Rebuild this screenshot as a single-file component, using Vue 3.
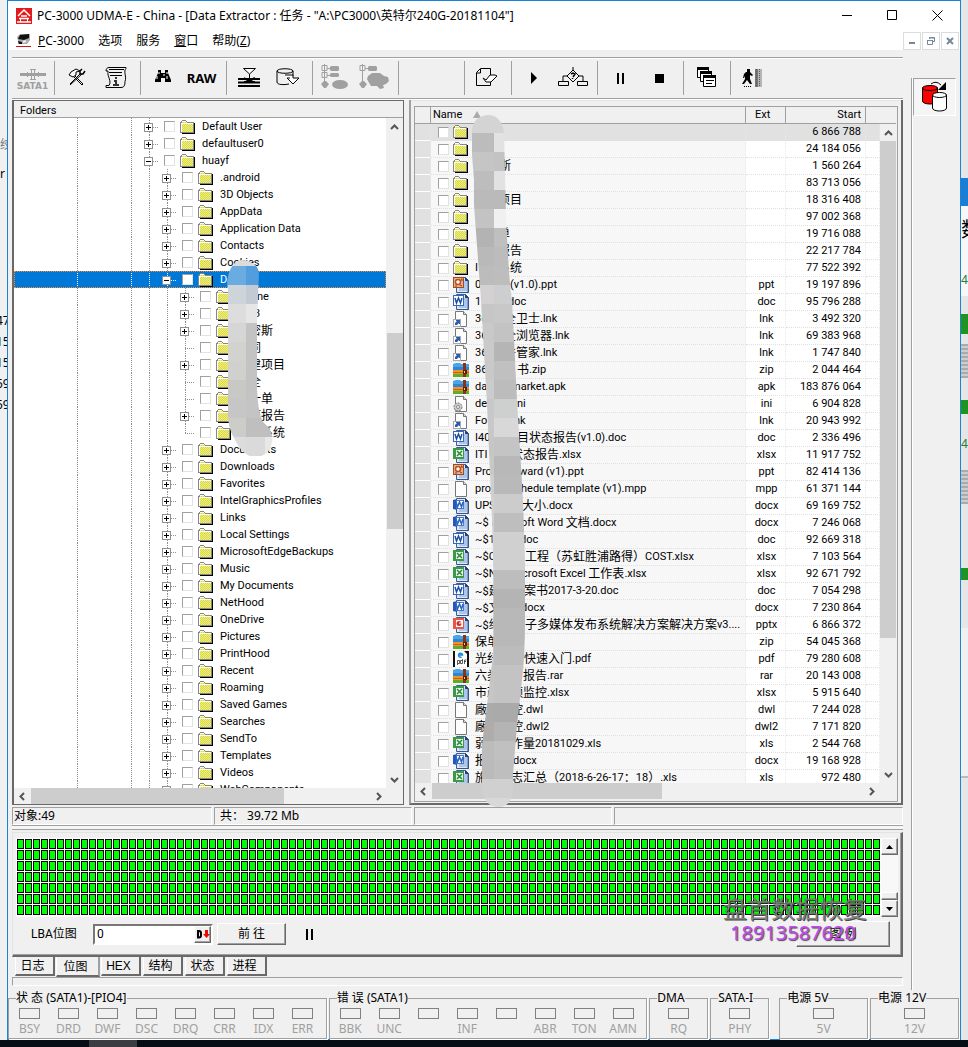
<script setup>
import { h, ref } from 'vue'

const CJK = /([\u2e80-\u9fff\uff00-\uffef]+)/

const MixedText = (props) =>
  props.text
    .split(CJK)
    .filter(Boolean)
    .map((part) => (CJK.test(part) ? h('span', { class: 'cjk' }, part) : part))
MixedText.props = ['text']

const menus = [
  { key: 'P', rest: 'C-3000' },
  { key: '', rest: '选项' },
  { key: '', rest: '服务' },
  { key: '窗', rest: '口' },
  { key: '', rest: '帮助(', tail: 'Z' },
]

const toolbar = [
  [{ id: 'sata', label: 'SATA1' }],
  [{ id: 'tools', label: 'Utilities' }, { id: 'script', label: 'Script' }],
  [{ id: 'find', label: 'Find' }, { id: 'raw', label: 'RAW recovery' }],
  [{ id: 'filter', label: 'Filter' }, { id: 'disk', label: 'Save disk' }],
  [{ id: 'tree1', label: 'Branch' }, { id: 'tree2', label: 'Branches' }],
  [],
  [{ id: 'doc', label: 'Task' }],
  [{ id: 'play', label: 'Start' }, { id: 'flow', label: 'Flow' }],
  [{ id: 'pause', label: 'Pause' }, { id: 'stop', label: 'Stop' }],
  [{ id: 'wins', label: 'Windows' }],
  [{ id: 'exit', label: 'Exit' }],
]

const node = (level, box, text, gap = 0, tail = '') => ({ level, box, text, gap, tail })
const tree = [
  node(0, '+', 'Default User'),
  node(0, '+', 'defaultuser0'),
  node(0, '-', 'huayf'),
  ...['.android', '3D Objects', 'AppData', 'Application Data', 'Contacts', 'Cookies'].map((n) => node(1, '+', n)),
  { ...node(1, '-', 'D'), selected: true },
  node(2, '+', '', 19, 'ne'),
  node(2, '+', '', 16, '3'),
  node(2, '+', '', 11, '密斯'),
  node(2, '', '', 11, '同'),
  node(2, '+', '', 11, '建项目'),
  node(2, '', '', 11, '全'),
  node(2, '', '', 11, '一单'),
  node(2, '+', '', 11, '项报告'),
  { ...node(2, '', '', 23, '系统'), last: true },
  ...[
    'Documents', 'Downloads', 'Favorites', 'IntelGraphicsProfiles', 'Links', 'Local Settings',
    'MicrosoftEdgeBackups', 'Music', 'My Documents', 'NetHood', 'OneDrive', 'Pictures', 'PrintHood',
    'Recent', 'Roaming', 'Saved Games', 'Searches', 'SendTo', 'Templates', 'Videos', 'WebComponents',
  ].map((n) => node(1, '+', n)),
]
const guidesOf = (n) => [63, 117, 135, ...(n.level > 0 ? [153] : [])]
const ownX = (n) => 135 + n.level * 18

const files = [
  ['folder', '', 0, '', '', '6 866 788'],
  ['folder', '', 0, '', '', '24 184 056'],
  ['folder', '', 24, '斯', '', '1 560 264'],
  ['folder', '', 0, '', '', '83 713 056'],
  ['folder', '', 23, '项目', '', '18 316 408'],
  ['folder', '', 0, '', '', '97 002 368'],
  ['folder', '', 23, '单', '', '19 716 088'],
  ['folder', '', 23, '报告', '', '22 217 784'],
  ['folder', 'I', 23, '系统', '', '77 522 392'],
  ['ppt', '0', 35, '(v1.0).ppt', 'ppt', '19 197 896'],
  ['doc', '1', 33, 'doc', 'doc', '95 796 288'],
  ['lnk', '36', 29, '全卫士.lnk', 'lnk', '3 492 320'],
  ['lnk', '36', 29, '全浏览器.lnk', 'lnk', '69 383 968'],
  ['lnk', '36', 29, '件管家.lnk', 'lnk', '1 747 840'],
  ['zip', '86', 42, '书.zip', 'zip', '2 044 464'],
  ['zip', 'da', 36, 'market.apk', 'apk', '183 876 064'],
  ['ini', 'de', 42, 'ni', 'ini', '6 904 828'],
  ['lnk', 'Fo', 39, 'nk', 'lnk', '20 943 992'],
  ['doc', 'I40', 42, '目状态报告(v1.0).doc', 'doc', '2 336 496'],
  ['xlsx', 'ITI', 36, '状态报告.xlsx', 'xlsx', '11 917 752'],
  ['ppt', 'Pro', 44, 'ward (v1).ppt', 'ppt', '82 414 136'],
  ['blank', 'proj', 46, 'hedule template (v1).mpp', 'mpp', '61 371 144'],
  ['docx', 'UPS', 47, '大小.docx', 'docx', '69 169 752'],
  ['docx', '~$ I', 46, 'oft Word 文档.docx', 'docx', '7 246 068'],
  ['doc', '~$1', 45, 'doc', 'doc', '92 669 318'],
  ['xlsx', '~$C', 50, '工程（苏虹胜浦路得）COST.xlsx', 'xlsx', '7 103 564'],
  ['xlsx', '~$N', 47, 'crosoft Excel 工作表.xlsx', 'xlsx', '92 671 792'],
  ['doc', '~$建', 49, '案书2017-3-20.doc', 'doc', '7 054 298'],
  ['docx', '~$文', 46, 'docx', 'docx', '7 230 864'],
  ['pptx', '~$绍', 50, '子多媒体发布系统解决方案解决方案v3....', 'pptx', '6 866 372'],
  ['zip', '保单', 0, '', 'zip', '54 045 368'],
  ['pdf', '光纤', 49, '快速入门.pdf', 'pdf', '79 280 608'],
  ['zip', '六类', 48, '报告.rar', 'rar', '20 143 008'],
  ['xlsx', '市政', 36, '频监控.xlsx', 'xlsx', '5 915 640'],
  ['blank', '廠房', 36, '控.dwl', 'dwl', '7 244 028'],
  ['blank', '廠房', 36, '控.dwl2', 'dwl2', '7 171 820'],
  ['xlsx', '弱电', 36, '作量20181029.xls', 'xls', '2 544 768'],
  ['docx', '报告', 38, 'docx', 'docx', '19 168 928'],
  ['xlsx', '施工', 36, '志汇总（2018-6-26-17：18）.xls', 'xls', '972 480'],
].map(([icon, text, gap, tail, ext, start]) => ({ icon, text, gap, tail, ext, start }))

const treeBlur = [
  ['#dcdcdc', '#dcdcdc', '#dcdcdc'], ['#6aabe0', '#519ddd', '#519ddd'], ['#cdd4da', '#c3cad3', '#c3cad3'],
  ['#dddddd', '#e6e6e6', '#e6e6e6'], ['#d6d6d6', '#c3c3c3', '#c3c3c3'], ['#d2d2cf', '#c3c3c3', '#c3c3c3'],
  ['#d0d0ce', '#c3c3c3', '#c3c3c3'], ['#c8c8c4', '#c3c3c3', '#c3c3c3'], ['#c6c6c6', '#c4c4c4', '#c4c4c4'],
  ['#cccdc8', '#bfbfbf', '#bfbfbf'], ['#dcdcdc', '#dadada', '#e8e8e8'],
]
const listBlur = [
  ['#d4d4d4', '#d4d4d4'], ['#bcbcbc', '#e2e2e2'], ['#c5c5c5', '#c3c3c3'], ['#bdbdbd', '#e2e2e2'],
  ['#bababa', '#bababa'], ['#c3c3c3', '#f0f0f0'], ['#b3b3b3', '#bfbfbf'], ['#b9b9b9', '#bcbcbc'],
  ['#bcbcbc', '#bdbdbd'], ['#d3d1d1', '#ccced0'], ['#c6c6c6', '#c8c8c8'], ['#c9c9c9', '#c3c3c3'],
  ['#cacaca', '#b5b5b5'], ['#c9c9c9', '#c0c0c0'], ['#cccccc', '#bcbcbc'], ['#c8c8c8', '#ced0d0'],
  ['#c8c8c8', '#d8d8d8'], ['#c6c6c6', '#c4c4c4'], ['#c8c8c8', '#b8b8b8'], ['#cfcfcf', '#b9b9b9'],
  ['#d0d0d0', '#cccccc'], ['#d0d0d0', '#bebebe'], ['#d4d4d4', '#d0d0d0'], ['#d2d2d2', '#d0d0d0'],
  ['#c3c3c3', '#bdbdbd'], ['#b8b8b8', '#b4b4b4'], ['#bababa', '#b8b8b8'], ['#c3c3c3', '#b8b8b8'],
  ['#c6c6c6', '#bcbcbc'], ['#c4c4c4', '#c3c3c3'], ['#c6c6c6', '#c3c3c3'], ['#ababab', '#aaaaaa'],
  ['#b0acac', '#b4b4b4'], ['#bcbcbc', '#c0c0c0'], ['#bababa', '#bebebe'], ['#d0d0d0', '#d0d0d0'],
  ['#d8d8d8', '#d8d8d8'],
]

const tabs = ['日志', '位图', 'HEX', '结构', '状态', '进程']
const activeTab = ref('位图')
const lba = ref('0')

const groups = [
  { id: 'state', title: '状 态 (SATA1)-[PIO4]', leds: ['BSY', 'DRD', 'DWF', 'DSC', 'DRQ', 'CRR', 'IDX', 'ERR'] },
  { id: 'error', title: '错 误 (SATA1)', leds: ['BBK', 'UNC', '', 'INF', '', 'ABR', 'TON', 'AMN'] },
  { id: 'dma', title: 'DMA', leds: ['RQ'] },
  { id: 'sata', title: 'SATA-I', leds: ['PHY'] },
  { id: 'p5', title: '电源 5V', leds: ['5V'] },
  { id: 'p12', title: '电源 12V', leds: ['12V'] },
]
</script>

<template>
  <div class="desktop">
    <svg class="defs" width="0" height="0" aria-hidden="true">
      <defs>
        <pattern id="dither" width="2" height="2" patternUnits="userSpaceOnUse">
          <rect width="2" height="2" fill="#ffff00" /><rect width="1" height="1" fill="#c8c8c8" /><rect x="1" y="1" width="1" height="1" fill="#c8c8c8" />
        </pattern>
        <pattern id="cells" width="8" height="11" patternUnits="userSpaceOnUse">
          <rect width="7" height="10" fill="#000" /><rect x="1" y="1" width="5" height="8" fill="#0f0" />
        </pattern>
      </defs>
      <symbol id="i-folder" viewBox="0 0 16 16">
        <path d="M14 4h1v11H2v-1h12z" fill="#000" />
        <path d="M0 3h1V2h1V1h4v1h1v1h7v1h0v10H0z" fill="#868686" />
        <path d="M1 4h1V2h4v1h1v1h6v9H1z" fill="url(#dither)" />
        <path d="M1 4h12v1H2v8H1zM2 2h4v1H2z" fill="#fff" />
      </symbol>
      <symbol id="i-blank" viewBox="0 0 16 16">
        <path d="M2.500.5h8l3 3v12h-11z" fill="#fdfdfd" stroke="#777" /><path d="M10.500.5v3h3" fill="#ddd" stroke="#777" />
      </symbol>
      <symbol id="i-lnk" viewBox="0 0 16 16">
        <use href="#i-blank" /><rect x="0.500" y="8.500" width="7" height="7" fill="#fff" stroke="#aaa" />
        <path d="M2 14v-2l2-2H3V9h4v4H6v-1l-2 2z" fill="#2a5bb0" />
      </symbol>
      <symbol id="i-ini" viewBox="0 0 16 16">
        <use href="#i-blank" /><circle cx="5" cy="11" r="4" fill="#c8ccca" stroke="#777" stroke-dasharray="2 1" /><circle cx="5" cy="11" r="1.500" fill="#fff" stroke="#888" />
      </symbol>
      <symbol id="i-page" viewBox="0 0 16 16">
        <path d="M3.500.5h9l3 3v12h-12z" fill="#dce9fa" stroke="#3c5d96" /><path d="M12 0l4 4h-4z" fill="#27406e" />
        <path d="M10 5h4M10 7h4M10 9h4M6 11h8M6 13h8" stroke="#7fa2d8" /><path d="M15 4v12H4" fill="none" stroke="#2f4f88" />
      </symbol>
      <symbol id="i-doc" viewBox="0 0 16 16">
        <use href="#i-page" /><rect x="0.500" y="1.500" width="10" height="10" fill="#fff" stroke="#3767b5" /><path d="M2 4l1.500 5L5.500 4l2 5L9 4" fill="none" stroke="#1f4ea6" stroke-width="1.500" />
      </symbol>
      <symbol id="i-docx" viewBox="0 0 16 16">
        <use href="#i-page" /><path d="M0 2l4-1v11l-4-1z" fill="#2358b8" /><rect x="3.500" y="2.500" width="7" height="8" fill="#fff" stroke="#4779c5" /><path d="M3 4l1.500 5L6.500 4l2 5L10 4" fill="none" stroke="#2c62c0" stroke-width="1.500" />
      </symbol>
      <symbol id="i-xlsx" viewBox="0 0 16 16">
        <use href="#i-page" /><path d="M0 1h11v11H0z" fill="#3c9a46" /><path d="M3 3h7v7H3z" fill="#e9f6e9" /><path d="M4 4l5 5M9 4L4 9" stroke="#27863a" stroke-width="1.500" />
      </symbol>
      <symbol id="i-ppt" viewBox="0 0 16 16">
        <use href="#i-page" /><rect x="0.500" y="0.500" width="10" height="10" fill="#e9b08c" stroke="#a04a22" /><circle cx="5" cy="5" r="2.500" fill="#fff" stroke="#b9501f" stroke-width="1.500" /><path d="M2 9h2M7 8l2 1M8 2h1v2" fill="none" stroke="#8d3511" />
      </symbol>
      <symbol id="i-pptx" viewBox="0 0 16 16">
        <use href="#i-page" /><path d="M0 1h11v11H0z" fill="#e8574a" /><rect x="3" y="3" width="7" height="7" fill="#fff" /><circle cx="6" cy="6.500" r="2.500" fill="#d6301f" /><path d="M6 6h3V4" stroke="#fff" fill="none" />
      </symbol>
      <symbol id="i-zip" viewBox="0 0 16 16">
        <path d="M0 3V2l3-1h4l1 1h8v5H0z" fill="#49a5e8" /><path d="M0 5h16v3H0z" fill="#2f86d0" /><path d="M0 8h16v4H0z" fill="#f0922c" /><path d="M0 10h16v1H0z" fill="#c4641b" /><path d="M0 12h16v3H0z" fill="#5cae25" />
        <path d="M10 1h3v14h-3z" fill="#8a3412" /><path d="M10 8h4v4h-4z" fill="#54200e" /><path d="M11 9h1v2h-1z" fill="#f3cf68" />
      </symbol>
      <symbol id="i-pdf" viewBox="0 0 16 16">
        <path d="M0 0h16v16H0z" fill="#111" /><path d="M2 0h9l3 3v13H2z" fill="#fff" /><path d="M5.500 4h4a2 2 0 10-1 2" fill="none" stroke="#1688d8" stroke-width="1.500" />
        <path d="M4.500 14V9.500h2v3h-2M9.500 8v4.500h-2v-3h2M11.500 13V9h2M11 10.500h2" fill="none" stroke="#333" stroke-width="0.800" />
      </symbol>

      <symbol id="t-sata" viewBox="0 0 32 20">
        <path d="M3 13.500h26" stroke="#a0a0a0" stroke-width="3" /><path d="M14.500 8v11M17.500 8v11M13 8.500h6M13 18.500h6M10.500 11v5M21.500 11v5" stroke="#a0a0a0" />
      </symbol>
      <symbol id="t-tools" viewBox="0 0 32 32">
        <path d="M9 22l11-11M9 23l12-11M12 12l10 10-1 1-10-10" fill="none" stroke="#000" /><path d="M8 13l2-3 5-3 4 2-4 1v3l-3 2z" fill="#fff" stroke="#000" /><path d="M19 12V9l2-2M24 9l-2 3h-3" fill="none" stroke="#000" stroke-width="1.500" />
      </symbol>
      <symbol id="t-script" viewBox="0 0 32 32">
        <path d="M9 5.500h17v1c-3 3 1 8-1 13 0 4-1 6-4 6H6v-2h3c3-4-2-10-1-13V9H6c0-2 1-3.500 3-3.500zM9 7.500h15M9 10.500h13M10 13.500h12" fill="none" stroke="#000" /><path d="M15 16h2M14 19h2v4M13 23h6" fill="none" stroke="#333" stroke-width="2" />
      </symbol>
      <symbol id="t-find" viewBox="0 0 32 32">
        <path d="M11 8h3v3h4V8h3v3l3 7v2h-6v-4h-4v4H8v-2l3-7z" fill="#000" /><path d="M12 10v2M10 14v3M20 10v2M17 12v2M20 14v3" stroke="#fff" />
      </symbol>
      <symbol id="t-filter" viewBox="0 0 32 32">
        <path d="M10.500 6.500h12L16.500 12z" fill="#fff" stroke="#000" /><path d="M16.500 12v4" stroke="#000" /><path d="M5 17h22M5 20.500h22M5 24h22" stroke="#000" stroke-width="2" /><path d="M11 16l5 3 6-3M11 20h11M12 24h9" fill="none" stroke="#000" stroke-width="2" />
      </symbol>
      <symbol id="t-disk" viewBox="0 0 32 32">
        <path d="M5 9c0-3 16-3 16 0s-16 3-16 0v11c0 3 7 3 12 2M21 9v5" fill="none" stroke="#000" /><path d="M13 13h8v3h6l-6 6-6-6" fill="#fff" stroke="#000" /><path d="M15 16h3" stroke="#000" />
      </symbol>
      <symbol id="t-tree1" viewBox="0 0 32 32">
        <path d="M3 3.500h5v5H3zM3 10.500h5v5H3zM5.500 2v20M8 6.500h4M8 13.500h4" fill="none" stroke="#a0a0a0" /><path d="M12 4h7l1 1v3l-1 1h-7l-1-1V5zM12 11h7l1 1v2l-1 1h-7l-1-1v-2zM2 22l3-3h2l3 3-3 4H5zM9 22h5" fill="#a0a0a0" /><ellipse cx="21" cy="22.500" rx="8" ry="4.500" fill="#a0a0a0" />
      </symbol>
      <symbol id="t-tree2" viewBox="0 0 32 32">
        <path d="M2 3.500h5v5H2zM4.500 2v20M7 6.500h4" fill="none" stroke="#a0a0a0" /><path d="M11 4h7l1 1v3l-1 1h-7l-1-1V5zM1 22l3-3h2l3 3-3 4H4z" fill="#a0a0a0" /><path d="M10 14l4-3h8l4 3 4 1 1 4-3 3-3 1 1 3-4 1-3-3h-6l-3-5-1-2z" fill="#a0a0a0" />
      </symbol>
      <symbol id="t-doc" viewBox="0 0 32 32">
        <path d="M9.500 6.500h10v17h-14v-13zM9.500 7v4H6M19.500 22.500V11" fill="none" stroke="#000" /><path d="M12 16l3 2 4-5h5l2 1-6 6h-5z" fill="#fff" stroke="#000" />
      </symbol>
      <symbol id="t-play" viewBox="0 0 32 32"><path d="M13 10v12l6-6z" /></symbol>
      <symbol id="t-flow" viewBox="0 0 32 32">
        <path d="M16 8l6 6-6 6-6-6zM10 14H6v5M22 14h4v5M16 8V5M1.500 19.500h10v4h-10zM20.500 19.500h10v4h-10z" fill="none" stroke="#000" /><path d="M14 12l2-1 2 1-2 3M15.500 16v1" fill="none" stroke="#000" stroke-width="1.500" />
      </symbol>
      <symbol id="t-pause" viewBox="0 0 32 32"><path d="M13 11h2v11h-2zM18 11h2v11h-2z" /></symbol>
      <symbol id="t-stop" viewBox="0 0 32 32"><path d="M12 12h9v9h-9z" /></symbol>
      <symbol id="t-wins" viewBox="0 0 32 32">
        <path d="M7.500 5.500h11v10h-11z" fill="#fff" stroke="#000" /><path d="M7 5h12v3H7z" /><path d="M10.500 9.500h11v10h-11z" fill="#fff" stroke="#000" /><path d="M10 9h12v3H10z" /><path d="M13.500 13.500h12v11h-12z" fill="#fff" stroke="#000" /><path d="M13 13h13v3H13z" /><path d="M16 18.500h8M16 21.500h6" stroke="#000" />
      </symbol>
      <symbol id="t-exit" viewBox="0 0 32 32">
        <path d="M10 7h3v3h-3zM9 10h4l3 3-1 1-2-1v4l2 5h-2l-3-4-3 4H5l3-5v-3l-1 2H6l1-4z" /><path d="M7 24.500h7" stroke="#000" stroke-dasharray="1 1" /><path d="M18 7h3v18h-3z" fill="#777" /><path d="M21 7h4v18h-4z" fill="#b5b5b5" /><path d="M19.500 7v18M22.500 7v18" stroke="#555" stroke-dasharray="1 1" />
      </symbol>
    </svg>

    <div class="stage">
      <div class="behind left" aria-hidden="true">
        <span class="b-t1">绞</span><span class="b-t2">r</span><span class="b-t3">47<br />15<br />15<br />59<br />59</span>
      </div>
      <div class="behind right" aria-hidden="true">
        <i class="r-blue"></i><i class="r-white"></i><span class="r-t1">数</span><span class="r-t2">4</span><i class="r-green g1"></i><i class="r-gray"></i><i class="r-green g2"></i><span class="r-t2 r-t3">4</span><i class="r-gray y2"></i><i class="r-green g3"></i><i class="r-white w2"></i>
      </div>

      <div class="window">
        <header class="titlebar">
          <svg class="app-icon" viewBox="0 0 16 16" width="16" height="16"><rect width="16" height="16" fill="#e11b1b" /><path d="M2 8l6-6 6 6M3 10.500h10M1 14h14M5 8h6" fill="none" stroke="#fff" stroke-width="1.500" /><path d="M4.500 10v4M11.500 10v4" stroke="#fff" /></svg>
          <h1>PC-3000 UDMA-E - China - [Data Extractor : 任务 - "A:\PC3000\英特尔240G-20181104"]</h1>
          <button class="wc" aria-label="Minimize"><svg width="11" height="11"><path d="M0 5.500h10" stroke="#000" /></svg></button>
          <button class="wc" aria-label="Maximize"><svg width="11" height="11"><path d="M.5.500h9v9h-9z" fill="none" stroke="#000" /></svg></button>
          <button class="wc" aria-label="Close"><svg width="11" height="11"><path d="M.5.500l10 10M10.500.5l-10 10" stroke="#000" /></svg></button>
        </header>
        <nav class="menubar">
          <svg class="menu-icon" width="16" height="16" viewBox="0 0 16 16"><path d="M1 4l3-3h10v6l-3 4H2V8z" fill="#aaa" /><path d="M4 2l9-1v4l-5 2-6-1zM2 8l4 1v2H3z" fill="#111" /><path d="M7 9l3-1" stroke="#eee" fill="none" stroke-width="2" /><path d="M0 13.500h15" stroke="#d11" /></svg>
          <button v-for="m in menus" :key="m.rest"><u>{{ m.key }}</u>{{ m.rest }}<template v-if="m.tail"><u>{{ m.tail }}</u>)</template></button>
          <span class="fill"></span>
          <button class="mdi" aria-label="Minimize child"><svg width="8" height="8"><path d="M1 6h6" stroke="#74889a" stroke-width="2" /></svg></button>
          <button class="mdi" aria-label="Restore child"><svg width="8" height="8"><path d="M2.500 2V.5h5v4H6M.5 3.500h5v4h-5zM2 1h6M0 3.500h6" fill="none" stroke="#74889a" /></svg></button>
          <button class="mdi" aria-label="Close child"><svg width="8" height="8"><path d="M1 1l6 6M7 1L1 7" stroke="#74889a" stroke-width="2" /></svg></button>
        </nav>

        <div class="body">
          <main>
            <div class="toolbar">
              <div v-for="(g, gi) in toolbar" :key="gi" class="tgroup" :class="{ empty: !g.length }">
                <button v-for="b in g" :key="b.id" :class="b.id" :aria-label="b.label" :title="b.label">
                  <b v-if="b.id === 'raw'">RAW</b>
                  <svg v-else width="32" :height="b.id === 'sata' ? 20 : 32"><use :href="'#t-' + b.id" /></svg>
                  <b v-if="b.id === 'sata'">SATA1</b>
                </button>
              </div>
            </div>

            <div class="panes">
              <section class="folders">
                <h2>Folders</h2>
                <div class="view">
                  <ul class="tree">
                    <li v-for="(n, i) in tree" :key="i" :class="{ selected: n.selected }">
                      <svg class="guides" :width="ownX(n) + 15" height="17">
                        <path v-for="x in guidesOf(n)" :key="x" :d="`M${x}.5 0v17`" />
                        <path v-if="n.level === 2" :d="`M${ownX(n)}.5 0v${n.last ? 9 : 17}`" />
                        <path :d="`M${ownX(n)} 9.500h10`" />
                        <g v-if="n.box" class="box">
                          <rect :x="ownX(n) - 4.5" y="5.500" width="8" height="8" />
                          <path :d="`M${ownX(n) - 3} 9.500h5` + (n.box === '+' ? `M${ownX(n) - 0.5} 7v5` : '')" />
                        </g>
                      </svg>
                      <input type="checkbox" :aria-label="n.text || n.tail" />
                      <svg class="fi" width="16" height="16"><use href="#i-folder" /></svg>
                      <span class="name"><span v-if="n.tail" class="pre" :style="{ width: n.gap + 'px' }">{{ n.text }}</span><MixedText :text="n.tail || n.text" /></span>
                    </li>
                  </ul>
                  <div class="vscroll" aria-hidden="true">
                    <svg width="9" height="6"><path d="M1 5l3.500-3.500L8 5" /></svg><i class="before"></i><i class="thumb"></i><i class="after"></i><svg width="9" height="6"><path d="M1 1l3.500 3.500L8 1" /></svg>
                  </div>
                </div>
                <div class="hscroll" aria-hidden="true">
                  <svg width="6" height="9"><path d="M5 1L1.500 4.500 5 8" /></svg><i class="thumb"></i><i class="after"></i><svg width="6" height="9"><path d="M1 1l3.500 3.500L1 8" /></svg>
                </div>
                <svg class="blur tree-blur" width="60" height="198" viewBox="0 0 60 198">
                  <clipPath id="treeClip"><path d="M0 22Q3 1 15 0Q31 1 32 14L30 62V128Q31 153 36 162Q47 171 45 182Q43 197 26 197Q15 195 7 178Q1 168 1 155V30z" /></clipPath>
                  <g clip-path="url(#treeClip)"><template v-for="(r, i) in treeBlur" :key="i"><rect v-for="(c, j) in r" :key="j" :x="j * 19" :y="i * 19 - 13" width="19" height="19" :fill="c" /></template></g>
                </svg>
              </section>

              <section class="files">
                <div class="listbox">
                  <div class="view">
                    <div class="table-clip">
                      <table>
                        <colgroup><col class="c-mark" /><col /><col class="c-ext" /><col class="c-start" /><col class="c-end" /></colgroup>
                        <thead><tr><th></th><th>Name <svg class="sort" width="8" height="7"><path d="M4 0l4 7H0z" fill="#aaa" /></svg></th><th class="ext">Ext</th><th class="start">Start</th><th></th></tr></thead>
                        <tbody>
                          <tr v-for="(f, i) in files" :key="i">
                            <td class="mark"></td>
                            <td class="name-cell"><div><input type="checkbox" :aria-label="f.tail || f.text" /><svg width="16" height="16"><use :href="'#i-' + f.icon" /></svg><span class="name"><span v-if="f.tail" class="pre" :style="{ width: f.gap + 'px' }"><MixedText :text="f.text" /></span><MixedText :text="f.tail || f.text" /></span></div></td>
                            <td class="ext">{{ f.ext }}</td><td class="start">{{ f.start }}</td><td></td>
                          </tr>
                        </tbody>
                      </table>
                    </div>
                    <div class="scroll-col">
                      <div class="stub"></div>
                      <div class="vscroll" aria-hidden="true">
                        <svg width="9" height="6"><path d="M1 5l3.500-3.500L8 5" /></svg><i class="thumb"></i><i class="after"></i><svg width="9" height="6"><path d="M1 1l3.500 3.500L8 1" /></svg>
                      </div>
                    </div>
                  </div>
                  <div class="hscroll" aria-hidden="true">
                    <svg width="6" height="9"><path d="M5 1L1.500 4.500 5 8" /></svg><i class="thumb"></i><i class="after"></i><svg width="6" height="9"><path d="M1 1l3.500 3.500L1 8" /></svg>
                  </div>
                </div>
                <svg class="blur list-blur" width="60" height="692" viewBox="0 0 60 692">
                  <clipPath id="listClip"><path d="M1 16Q2 1 17 0Q30 0 33 17L35 100Q38 170 41 185L46 285L52 385L54 445V505Q54 540 51 565L46 610L42 660V676Q40 692 27 692Q12 691 11 672V630L16 590L22 540Q23 460 21 405L16 290L10 185L3 90V65L1 40z" /></clipPath>
                  <g clip-path="url(#listClip)"><template v-for="(r, i) in listBlur" :key="i"><rect x="0" :y="i * 19 - 1" width="23" height="19" :fill="r[0]" /><rect x="23" :y="i * 19 - 1" width="37" height="19" :fill="r[1]" /></template></g>
                </svg>
              </section>
            </div>

            <div class="status"><span>对象:49</span><span>共：&nbsp;39.72 Mb</span><span></span><span></span></div>
            <div class="rule"></div>

            <section class="map">
              <div class="map-top">
                <div class="cells"><svg width="100%" height="76"><rect width="100%" height="76" fill="url(#cells)" /></svg></div>
                <div class="classic-scroll"><button aria-label="Scroll up"><svg width="7" height="4"><path d="M0 4l3.500-4L7 4z" /></svg></button><span></span><i></i><button aria-label="Scroll down"><svg width="7" height="4"><path d="M0 0l3.500 4L7 0z" /></svg></button></div>
              </div>
              <div class="map-tools">
                <label for="lba">LBA<span class="cjk">位图</span></label>
                <div class="field"><input id="lba" v-model="lba" type="text" /><button aria-label="Decimal"><svg width="14" height="9"><path d="M2 1h1q2 0 2 2v2.500q0 2-2 2H2z" fill="none" stroke="#000" stroke-width="2" /><path d="M9 0h3v4h2l-3.500 4L7 4h2z" fill="#f00" /></svg></button></div>
                <button class="raised">前 往</button>
                <button class="flat" aria-label="Pause map"><svg width="8" height="11"><path d="M0 0h2v11H0zM5 0h2v11H5z" /></svg></button>
                <span class="fill"></span>
                <button class="raised legend-btn">图 例</button>
              </div>
              <div class="watermark" aria-hidden="true"><span>盘首数据恢复</span><strong>18913587620</strong></div>
            </section>

            <div class="tabs" role="tablist">
              <button v-for="t in tabs" :key="t" role="tab" :aria-selected="t === activeTab" :class="{ active: t === activeTab }" @click="activeTab = t">{{ t }}</button>
            </div>
            <div class="progress"></div>
          </main>

          <aside>
            <button aria-label="Copy drive">
              <svg width="28" height="32" viewBox="0 0 28 32"><path d="M1.500 7v13c0 4 15 4 15 0V7z" fill="#f00" stroke="#000" /><ellipse cx="9" cy="7" rx="7.500" ry="2.500" fill="#f00" stroke="#000" /><path d="M11.500 14v13c0 4 14 4 14 0V14z" fill="#fff" stroke="#000" /><ellipse cx="18.500" cy="14" rx="7" ry="2.500" fill="#fff" stroke="#000" /><path d="M10 3q5-4 10 1" fill="none" stroke="#000" /><path d="M25 1v8h-8z" /></svg>
            </button>
          </aside>
        </div>

        <footer>
          <fieldset v-for="g in groups" :key="g.id" :class="g.id">
            <legend>{{ g.title }}</legend>
            <div v-for="(l, i) in g.leds" :key="i" class="led"><i></i><span>{{ l }}</span></div>
          </fieldset>
        </footer>
      </div>
    </div>
    <div class="taskbar"><i></i></div>
  </div>
</template>

<style>
body { margin: 0; background: #e6e6e6; }
</style>

<style scoped>
.desktop { height: 100vh; min-height: 600px; display: flex; flex-direction: column; overflow: hidden; color: #000; font: 12px/16px "Noto Sans", "Noto Sans CJK SC", sans-serif; }
.desktop * { box-sizing: border-box; }
.defs { position: absolute; }
button { font: inherit; color: inherit; background: none; border: 0; padding: 0; margin: 0; }
.fill { flex: 1; }
svg { flex: none; }
.stage { flex: 1; min-height: 0; position: relative; padding: 0 7px; background: #e4e4e4; }
.window { position: relative; height: 100%; border: 1px solid #1883d7; background: #f0f0f0; display: flex; flex-direction: column; }
.taskbar { height: 7px; background: #070d14; padding-left: 89px; flex: none; }
.taskbar i { display: block; width: 48px; height: 7px; background: #3a3d42; }

.behind { position: absolute; top: 0; bottom: 0; width: 8px; overflow: hidden; background: #f0f0f0; }
.behind.left { left: 0; }
.behind.right { right: 0; width: 7px; background: #e6e6e6; }
.behind span, .behind i { position: absolute; left: 0; white-space: nowrap; }
.b-t1 { top: 137px; color: #777; }
.b-t2 { top: 166px; }
.b-t3 { top: 310px; line-height: 21px; font-size: 12px; margin-left: -4px; }
.r-blue { top: 178px; width: 8px; height: 28px; background: #1a7fd4; }
.r-white { top: 206px; width: 8px; height: 90px; background: #f7f7f7; }
.r-white.w2 { top: 628px; height: 150px; background: #f0f0f0; border-bottom: 2px solid #bbb; }
.r-t1 { top: 218px; font-size: 20px; line-height: 24px; }
.r-t2 { top: 272px; color: #2c7a2c; }
.r-t3 { top: 436px; }
.r-green { width: 8px; height: 20px; background: #1f9420; }
.g1 { top: 314px; } .g2 { top: 400px; height: 14px; } .g3 { top: 568px; height: 12px; }
.r-gray { top: 344px; width: 8px; height: 34px; background: repeating-linear-gradient(#aaa 0 2px, #ccc 2px 4px); }
.r-gray.y2 { top: 470px; }

.titlebar { height: 29px; flex: none; background: #fff; display: flex; align-items: center; padding-left: 8px; }
.titlebar h1 { flex: 1; min-width: 0; margin: 0 0 0 5px; font-size: 12px; font-weight: 400; white-space: nowrap; overflow: hidden; }
.wc { width: 45px; height: 29px; display: grid; place-items: center; }
.menubar { height: 20px; flex: none; background: #fff; display: flex; align-items: center; padding: 1px 1px 0 8px; }
.menu-icon { margin-right: 6px; }
.menubar > button { margin-right: 14px; white-space: nowrap; }
.menubar > button.mdi { width: 18px; height: 18px; margin: 0 0 0 1px; border: 1px solid #dcdcdc; display: grid; place-items: center; }

.body { flex: 1; min-height: 0; display: flex; }
main { flex: 1; min-width: 0; margin: 7px 8px 4px 4px; display: flex; flex-direction: column; }
aside { width: 49px; flex: none; margin-top: 28px; border-left: 1px solid #a0a0a0; box-shadow: inset 1px 0 #fff; }
aside button { width: 43px; height: 38px; margin-left: 1px; border: 1px solid #fff; border-left-color: #a0a0a0; border-top-color: #a0a0a0; background: #f5f5f5; display: grid; place-items: center; }

.toolbar { height: 42px; flex: none; margin-bottom: 1px; border: 1px solid #a0a0a0; border-width: 1px 0; box-shadow: inset 0 1px #fff, 0 1px #fff; display: flex; padding: 3px 0; }
.tgroup { display: flex; padding: 0 5px 0 2px; border-left: 1px solid #a0a0a0; }
.tgroup:first-child { border: 0; padding: 0 2px 0 1px; }
.tgroup.empty { width: 66px; }
.tgroup button { width: 39px; height: 34px; display: grid; place-items: center; overflow: hidden; }
.raw b { font: 700 13px/16px "Noto Sans", sans-serif; }
.tgroup .sata { color: #a0a0a0; align-content: start; }
.sata b { font: 700 9px/11px "DejaVu Sans", sans-serif; }

.panes { flex: 1; min-height: 0; display: flex; font: 11px/16px Roboto, "Noto Sans CJK SC", sans-serif; }
:deep(.cjk), .cjk { font-size: 12px; }
.folders { position: relative; width: 392px; flex: none; border: 2px solid #696969; border-width: 1px 1px 1px 2px; background: #fff; display: flex; flex-direction: column; }
.folders h2 { margin: 0; height: 17px; font: inherit; line-height: 20px; padding-left: 6px; background: #f0f0f0; border-bottom: 1px solid #a0a0a0; flex: none; }
.view { flex: 1; min-height: 0; display: flex; overflow: hidden; }
.tree { list-style: none; margin: 0; padding: 0; flex: 1; overflow: hidden; }
.tree li { height: 17px; display: flex; align-items: center; white-space: nowrap; }
.tree li.selected { background: #0078d7; color: #fff; outline: 1px dotted #ff8728; outline-offset: -1px; }
.guides path { stroke: #909090; stroke-dasharray: 1 1; fill: none; }
.selected .guides > path { stroke: #fff; }
.guides .box rect { fill: #fff; stroke: #909090; }
.guides .box path { stroke: #000; stroke-dasharray: none; }
input[type="checkbox"] { appearance: none; margin: 0; width: 11px; height: 11px; flex: none; background: #fff; border: 1px solid #e3e3e3; border-top-color: #a0a0a0; border-left-color: #a0a0a0; }
.fi { margin: 0 6px 0 5px; }
.name { display: flex; align-items: center; white-space: pre; }
.pre { display: inline-block; flex: none; overflow: hidden; white-space: nowrap; }

.vscroll { width: 16px; flex: none; background: #f0f0f0; display: flex; flex-direction: column; align-items: center; padding: 6px 0 5px; }
.vscroll i { width: 16px; }
.vscroll path, .hscroll path { stroke: #555; stroke-width: 2; fill: none; }
.vscroll .thumb, .hscroll .thumb { background: #cdcdcd; }
.folders .vscroll { width: 17px; }
.folders .vscroll .before { flex: 202; }
.folders .vscroll .thumb { flex: 195; }
.folders .vscroll .after { flex: 247; }
.hscroll { height: 16px; flex: none; background: #f0f0f0; display: flex; align-items: center; padding: 0 21px 0 5px; }
.hscroll i { height: 16px; }
.hscroll .thumb { margin-left: 6px; }
.folders .hscroll .thumb { flex: 252; }
.folders .hscroll .after { flex: 91; }
.blur { position: absolute; pointer-events: none; }
.tree-blur { left: 213px; top: 159px; }

.files { position: relative; flex: 1; min-width: 0; margin-left: 5px; border: 1px solid #696969; border-width: 0 2px 2px 0; padding: 6px 3px 1px; border-left: 2px solid #a0a0a0; box-shadow: inset 0 1px #e3e3e3; display: flex; }
.listbox { flex: 1; min-width: 0; border: 1px solid #a0a0a0; display: flex; flex-direction: column; padding: 0 1px 2px 0; }
.table-clip { flex: 1; min-width: 0; overflow: hidden; background: #fff; }
table { width: 100%; border-collapse: separate; border-spacing: 0; table-layout: fixed; }
.c-mark { width: 16px; } .c-ext { width: 40px; } .c-start { width: 80px; } .c-end { width: 14px; }
th { height: 17px; padding: 0 0 0 2px; font-weight: 400; text-align: left; background: #f0f0f0; border-bottom: 1px solid #a0a0a0; border-right: 1px solid #a0a0a0; line-height: 16px; }
th:last-child { border-right: 0; }
.sort { margin-left: 8px; }
th.ext { padding-left: 9px; }
td { height: 17px; padding: 0; line-height: 16px; border-bottom: 1px dotted #e0e0e0; border-right: 1px dotted #e8e8e8; }
.mark { background: #e1e1e1; border-bottom: 1px solid #fff; }
.name-cell { background: #f7f7f7; padding-left: 7px; }
.name-cell div { display: flex; height: 16px; align-items: center; white-space: nowrap; overflow: hidden; }
.name-cell svg { margin: 0 6px 0 4px; }
tbody tr:first-child td { background: #e1e1e1; }
td.ext { text-align: center; padding-left: 2px; }
.start { text-align: right; padding-right: 4px; }
.scroll-col { display: flex; flex-direction: column; width: 16px; flex: none; }
.stub { height: 17px; flex: none; border-bottom: 1px solid #a0a0a0; }
.scroll-col .vscroll { flex: 1; }
.files .vscroll .thumb { flex: 496; margin-top: 5px; }
.files .vscroll .after { flex: 134; }
.files .hscroll .thumb { flex: 230; }
.files .hscroll .after { flex: 207; }
.list-blur { left: 60px; top: 15px; }

.status { height: 18px; flex: none; margin-top: 2px; display: flex; gap: 2px; line-height: 16px; }
.status span { width: 198px; flex: none; padding-left: 5px; border: 1px solid #fff; border-left-color: #a0a0a0; border-top-color: #a0a0a0; white-space: nowrap; }
.status span:first-child { width: 200px; padding-left: 1px; }
.status span:last-child { flex: 1; }
.rule { height: 5px; flex: none; margin-bottom: 2px; border: 1px solid #a0a0a0; border-width: 1px 0; background: #f6f6f6; }

.map { position: relative; flex: none; border: 1px solid #696969; border-width: 1px 2px 2px 1px; border-top-color: #e3e3e3; border-left-color: #e3e3e3; box-shadow: inset -1px -1px #a0a0a0; padding: 5px 3px 5px; }
.map-top { display: flex; height: 79px; }
.cells { flex: 1; min-width: 0; background: #fff; padding: 1px 1px 0; overflow: hidden; }
.cells svg { display: block; }
.classic-scroll { width: 17px; flex: none; display: flex; flex-direction: column; background: #f8f8f8; }
.classic-scroll span { flex: 1; }
.classic-scroll button, .classic-scroll i { height: 17px; background: #f0f0f0; border: 1px solid #696969; border-top-color: #fff; border-left-color: #fff; box-shadow: inset -1px -1px #a0a0a0; display: grid; place-items: center; }
.classic-scroll i { height: 8px; }
.map-tools { display: flex; align-items: center; height: 33px; padding: 1px 8px 0 15px; font: 12px/16px Roboto, "Noto Sans CJK SC", sans-serif; }
.map-tools label { width: 62px; font-size: 12px; }
.field { width: 120px; height: 21px; display: flex; background: #fff; border: 2px solid #fff; border-top-color: #777; border-left-color: #777; }
.field input { flex: 1; min-width: 0; border: 0; padding: 0 2px; font: inherit; outline: 0; background: none; }
.field button, .raised { background: #f0f0f0; border: 1px solid #696969; border-top-color: #fff; border-left-color: #fff; box-shadow: inset -1px -1px #a0a0a0; }
.field button { width: 17px; display: grid; place-items: center; }
.raised { width: 69px; height: 22px; margin-left: 4px; }
.flat { margin-left: 20px; display: grid; }
.legend-btn { width: 94px; height: 26px; }
.watermark { position: absolute; right: 34px; bottom: 10px; display: flex; flex-direction: column; align-items: center; pointer-events: none; }
.watermark span { font: 24px/26px "Noto Sans CJK SC", sans-serif; color: #777; opacity: 0.9; text-shadow: 1px 1px #333; }
.watermark strong { font: 20px/24px "Noto Sans", sans-serif; color: #c04bf0; text-shadow: 1px 1px 1px #444; margin-right: 4px; }

.tabs { height: 20px; flex: none; padding-left: 3px; display: flex; align-items: flex-start; gap: 2px; font: 12px/16px "Liberation Sans", "Noto Sans CJK SC", sans-serif; }
.tabs button { width: 40px; height: 19px; border: 1px solid #696969; border-width: 0 2px 2px 1px; border-left-color: #fff; padding: 1px 4px 0 0; }
.tabs button.active { width: 44px; height: 20px; margin: 0 -1px; border-color: #a0a0a0; border-bottom-color: #696969; border-left-color: #fff; padding-top: 2px; }
.progress { height: 9px; flex: none; border: 1px solid #fff; border-top-color: #a0a0a0; border-left-color: #a0a0a0; }

footer { flex: none; display: grid; grid-template-columns: minmax(0, 319fr) minmax(0, 319fr) minmax(0, 59fr) minmax(0, 59fr) minmax(0, 97fr) minmax(0, 89fr); height: 49px; gap: 2px; padding-right: 1px; }
fieldset { margin: 0; min-width: 0; padding: 0 4px; border: 1px solid #a0a0a0; box-shadow: 1px 1px #fff; display: flex; justify-content: space-around; }
legend { line-height: 16px; height: 16px; padding: 0; margin-left: 3px; white-space: nowrap; }
fieldset.state, fieldset.error { padding: 0 1px; justify-content: flex-start; }
.state legend, .error legend { margin-left: 6px; }
fieldset.p5 { margin-left: 8px; }
.led { width: 39px; display: flex; flex-direction: column; align-items: center; color: #a0a0a0; padding-top: 2px; line-height: 16px; white-space: nowrap; }
.led i { width: 21px; height: 11px; flex: none; border: 1px solid #808080; margin-bottom: 2px; }
</style>
